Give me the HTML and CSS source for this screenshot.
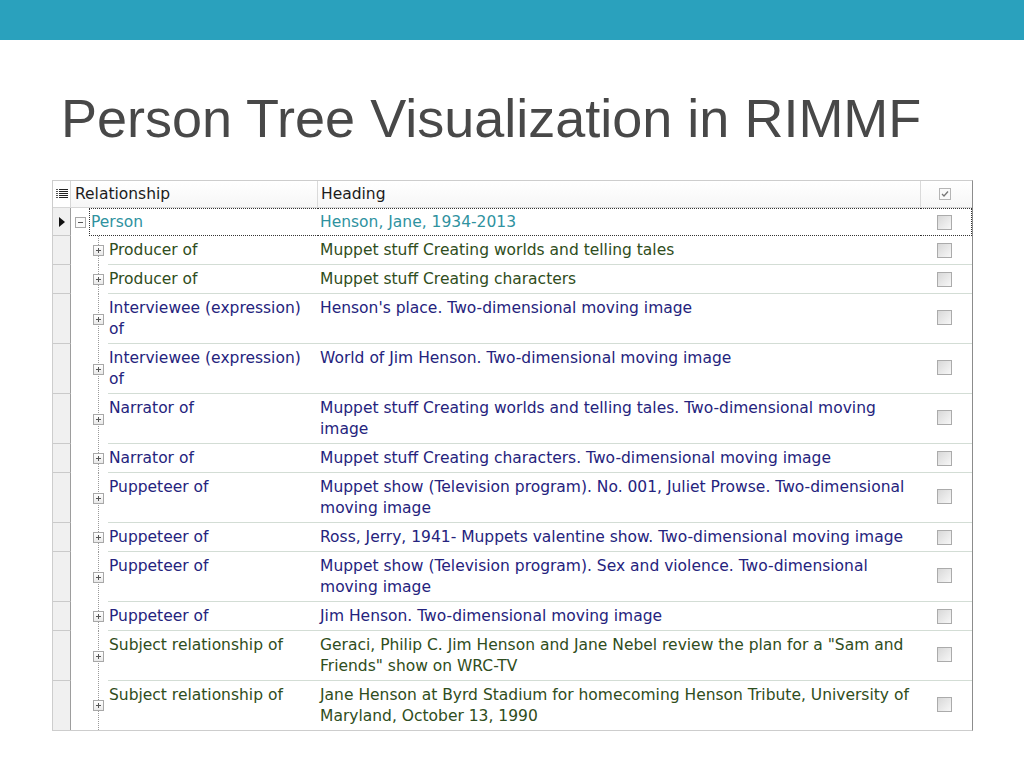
FILE: index.html
```html
<!DOCTYPE html>
<html>
	<head>
		<meta charset="utf-8">
		<title>Person Tree Visualization in RIMMF</title>
		<link rel="stylesheet" href="styles.css">
	</head>
	<body>
		<div class="topbar"></div>
		<h1 class="title">Person Tree Visualization in RIMMF</h1>

		<table class="grid">
			<colgroup>
				<col class="c-gut">
				<col class="c-a">
				<col class="c-b">
				<col class="c-rel">
				<col class="c-head">
				<col class="c-chk">
			</colgroup>
			<tr class="hdr">
				<td class="gut">
					<svg width="12" height="10" viewBox="0 0 12 10"><path d="M0 0.5h2M0 2.5h2M0 4.5h2M0 6.5h2M0 8.5h2" stroke="#555"/><path d="M3 0.5h9M3 2.5h9M3 4.5h9M3 6.5h9M3 8.5h9" stroke="#222"/></svg>
				</td>
				<td class="h-rel" colspan="3">Relationship</td>
				<td class="h-head">Heading</td>
				<td class="h-chk">
					<svg width="12" height="12" viewBox="0 0 12 12"><rect x="0.5" y="0.5" width="11" height="11" fill="#fafafa" stroke="#b5b5b5"/><path d="M3 6l2 2 4-4.5" fill="none" stroke="#777" stroke-width="1.3"/></svg>
				</td>
			</tr>
			<tr class="root">
				<td class="gut"><svg class="cur" width="6" height="10" viewBox="0 0 6 10"><path d="M0 0l6 5-6 5z" fill="#111"/></svg></td>
				<td class="tw">
					<svg width="11" height="11" viewBox="0 0 11 11"><rect x="0.5" y="0.5" width="10" height="10" fill="#fbfbfb" stroke="#a8a8a8"/><path d="M3 5.5h5" stroke="#555"/></svg>
				</td>
				<td class="rel" colspan="2">Person</td>
				<td class="head">Henson, Jane, 1934-2013</td>
				<td class="chk"><i class="box"></i></td>
			</tr>
			<tr class="green">
				<td class="gut"></td>
				<td class="tree" colspan="2"><i class="plus"></i></td>
				<td class="rel">Producer of</td>
				<td class="head">Muppet stuff Creating worlds and telling tales</td>
				<td class="chk"><i class="box"></i></td>
			</tr>
			<tr class="green">
				<td class="gut"></td>
				<td class="tree" colspan="2"><i class="plus"></i></td>
				<td class="rel">Producer of</td>
				<td class="head">Muppet stuff Creating characters</td>
				<td class="chk"><i class="box"></i></td>
			</tr>
			<tr class="navy tall">
				<td class="gut"></td>
				<td class="tree" colspan="2"><i class="plus"></i></td>
				<td class="rel">Interviewee (expression)<br>of</td>
				<td class="head">Henson's place. Two-dimensional moving image</td>
				<td class="chk"><i class="box"></i></td>
			</tr>
			<tr class="navy tall">
				<td class="gut"></td>
				<td class="tree" colspan="2"><i class="plus"></i></td>
				<td class="rel">Interviewee (expression)<br>of</td>
				<td class="head">World of Jim Henson. Two-dimensional moving image</td>
				<td class="chk"><i class="box"></i></td>
			</tr>
			<tr class="navy tall">
				<td class="gut"></td>
				<td class="tree" colspan="2"><i class="plus"></i></td>
				<td class="rel">Narrator of</td>
				<td class="head">Muppet stuff Creating worlds and telling tales. Two-dimensional moving<br>image</td>
				<td class="chk"><i class="box"></i></td>
			</tr>
			<tr class="navy">
				<td class="gut"></td>
				<td class="tree" colspan="2"><i class="plus"></i></td>
				<td class="rel">Narrator of</td>
				<td class="head">Muppet stuff Creating characters. Two-dimensional moving image</td>
				<td class="chk"><i class="box"></i></td>
			</tr>
			<tr class="navy tall">
				<td class="gut"></td>
				<td class="tree" colspan="2"><i class="plus"></i></td>
				<td class="rel">Puppeteer of</td>
				<td class="head">Muppet show (Television program). No. 001, Juliet Prowse. Two-dimensional<br>moving image</td>
				<td class="chk"><i class="box"></i></td>
			</tr>
			<tr class="navy">
				<td class="gut"></td>
				<td class="tree" colspan="2"><i class="plus"></i></td>
				<td class="rel">Puppeteer of</td>
				<td class="head">Ross, Jerry, 1941- Muppets valentine show. Two-dimensional moving image</td>
				<td class="chk"><i class="box"></i></td>
			</tr>
			<tr class="navy tall">
				<td class="gut"></td>
				<td class="tree" colspan="2"><i class="plus"></i></td>
				<td class="rel">Puppeteer of</td>
				<td class="head">Muppet show (Television program). Sex and violence. Two-dimensional<br>moving image</td>
				<td class="chk"><i class="box"></i></td>
			</tr>
			<tr class="navy">
				<td class="gut"></td>
				<td class="tree" colspan="2"><i class="plus"></i></td>
				<td class="rel">Puppeteer of</td>
				<td class="head">Jim Henson. Two-dimensional moving image</td>
				<td class="chk"><i class="box"></i></td>
			</tr>
			<tr class="green tall">
				<td class="gut"></td>
				<td class="tree" colspan="2"><i class="plus"></i></td>
				<td class="rel">Subject relationship of</td>
				<td class="head">Geraci, Philip C. Jim Henson and Jane Nebel review the plan for a "Sam and<br>Friends" show on WRC-TV</td>
				<td class="chk"><i class="box"></i></td>
			</tr>
			<tr class="green tall last">
				<td class="gut"></td>
				<td class="tree" colspan="2"><i class="plus"></i></td>
				<td class="rel">Subject relationship of</td>
				<td class="head">Jane Henson at Byrd Stadium for homecoming Henson Tribute, University of<br>Maryland, October 13, 1990</td>
				<td class="chk"><i class="box"></i></td>
			</tr>
		</table>
	</body>
</html>
```

FILE: styles.css
```css
*{margin: 0; padding: 0;}
body{background: #fff; font-family: "Liberation Sans", Arial, sans-serif;}

.topbar{height: 40px; background: #2aa1bd;}
.title{margin: 48px 0 0 61px; height: 60px; font-size: 54px; line-height: 60px; font-weight: normal; color: #484848;}

.grid{margin: 32px 0 0 52px; width: 921px; table-layout: fixed; border-collapse: separate; border-spacing: 0; border: 1px solid #cdcdcd; border-right-color: #8c8c8c; font-family: "DejaVu Sans", sans-serif; font-size: 15.5px; line-height: 21px;}
.c-gut{width: 18px;}
.c-a{width: 18px;}
.c-b{width: 19px;}
.c-rel{width: 210px;}
.c-head{width: 603px;}
.c-chk{width: 51px;}

td{padding: 4px 0 3px; vertical-align: top; white-space: nowrap; overflow: hidden;}
.tall td{padding-bottom: 3px;}

.gut{background: #f0f0f0; border-right: 1px solid #9d9d9d; border-bottom: 1px solid #cacaca; text-align: center; vertical-align: middle; padding: 0;}
.rel{padding-left: 1px; border-bottom: 1px solid #d3ddd5;}
.head{padding-left: 2px; border-bottom: 1px solid #d3ddd5;}
.chk{text-align: center; vertical-align: middle; border-bottom: 1px solid #d3ddd5; padding: 0 4px 0 0;}

/* header */
.hdr td{height: 26px; padding: 0; vertical-align: middle; background: linear-gradient(#fff, #f6f6f6); border-bottom: 1px solid #d6d6d6; color: #1c1c1c;}
.hdr .gut{background: #fff; border-right: 1px solid #d6d6d6;}
.hdr svg{display: block; margin: 0 auto;}
.h-rel{padding-left: 4px !important; border-right: 1px solid #dadada;}
.h-head{padding-left: 3px !important; border-right: 1px solid #dadada;}
.h-chk{padding-right: 4px !important;}

/* focused root row */
.root td{padding-top: 3px; padding-bottom: 2px;}
.root .gut{padding: 0;}
.cur{display: block; margin: 0 auto;}
.root .tw{vertical-align: middle; padding: 0 0 0 4px;}
.root .tw svg{display: block;}
.root .rel, .root .head, .root .chk{border-top: 1px dotted #333; border-bottom: 1px dotted #333; color: #2f929f;}
.root .rel{border-left: 1px dotted #333; padding-left: 1px;}
.root .chk{border-right: 1px dotted #333;}

/* tree gutter with dotted connector */
.tree{padding: 0 0 0 22px !important; vertical-align: middle; background: linear-gradient(#9a9a9a 50%, transparent 50%) 27px 0 / 1px 2px repeat-y;}
.plus{display: block; width: 9px; height: 9px; border: 1px solid #a8a8a8; background: linear-gradient(#fff, #e9e9e9); position: relative;}
.plus::before{content: ""; position: absolute; left: 2px; top: 4px; width: 5px; height: 1px; background: #555;}
.plus::after{content: ""; position: absolute; left: 4px; top: 2px; width: 1px; height: 5px; background: #555;}

.box{display: inline-block; width: 13px; height: 13px; border: 1px solid #ababab; background: linear-gradient(135deg, #d8d8d8, #f7f7f7); vertical-align: middle;}

.green td{color: #2f4d20;}
.navy td{color: #25237d;}
.last td{border-bottom: none;}
.last .gut{border-bottom: none;}
```
